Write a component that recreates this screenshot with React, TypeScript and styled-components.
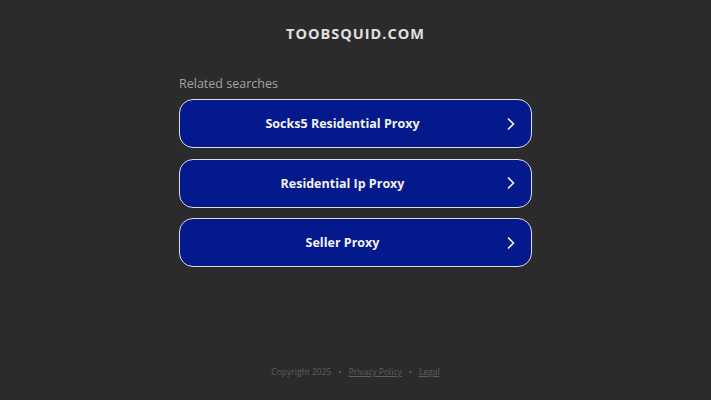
import React from 'react';
import styled, { createGlobalStyle } from 'styled-components';

const GlobalStyle = createGlobalStyle`
    html, body {
        margin: 0;
        padding: 0;
        background: #2b2b2b;
        font-family: "Open Sans", "Liberation Sans", sans-serif;
    }
`

const Page = styled.div`
    height: 400px;
    display: flex;
    flex-direction: column;
    align-items: center;
    box-sizing: border-box;
    padding-top: 24px;
`

const Domain = styled.h1`
    margin: 0;
    font-size: 14.5px;
    line-height: 20px;
    font-weight: 700;
    letter-spacing: 1px;
    color: #e0e0e0;
`

const Searches = styled.div`
    width: 353px;
    margin-top: 30px;
    display: flex;
    flex-direction: column;
    gap: 10.5px;
`

const Heading = styled.div`
    font-size: 12.5px;
    line-height: 20px;
    color: #a3a3a3;
    margin-bottom: -5.5px;
`

const LinkButton = styled.a`
    height: 49px;
    box-sizing: border-box;
    display: flex;
    align-items: center;
    padding-right: 14px;
    background: #03198c;
    border: 1.5px solid #dcdce6;
    border-radius: 14px;
    color: #f2f2f2;
    font-size: 12.5px;
    font-weight: 700;
    text-decoration: none;
    cursor: pointer;

    span {
        flex: 1;
        text-align: center;
    }
`

const Footer = styled.div`
    margin-top: auto;
    margin-bottom: 23px;
    display: flex;
    gap: 7px;
    font-size: 8.5px;
    color: #5e5e5e;

    a {
        color: #5e5e5e;
        text-decoration: underline;
    }
`

const Chevron = () => (
    <svg width="12" height="14" viewBox="0 0 12 14" fill="none">
        <path d="M3.5 2 L8.5 7 L3.5 12" stroke="#f2f2f2" strokeWidth="1.7" strokeLinecap="round" strokeLinejoin="round" />
    </svg>
)

const items = ['Socks5 Residential Proxy', 'Residential Ip Proxy', 'Seller Proxy'];

const App = () => {
  return (
    <Page>
        <GlobalStyle />
        <Domain>TOOBSQUID.COM</Domain>
        <Searches>
            <Heading>Related searches</Heading>
            {items.map((item) => (
                <LinkButton key={item}>
                    <span>{item}</span>
                    <Chevron />
                </LinkButton>
            ))}
        </Searches>
        <Footer>
            <span>Copyright 2025</span>
            <span>•</span>
            <a>Privacy Policy</a>
            <span>•</span>
            <a>Legal</a>
        </Footer>
    </Page>
  );
}

export default App;
